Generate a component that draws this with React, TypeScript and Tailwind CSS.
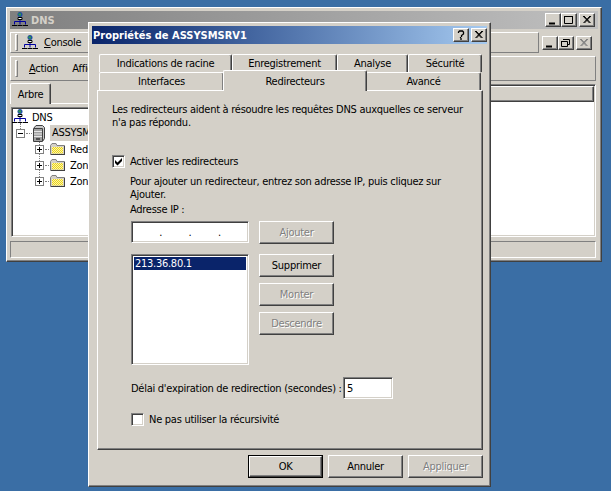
const raised =
  "border border-t-white border-l-white border-r-[#404040] border-b-[#404040] shadow-[inset_-1px_-1px_0_#808080] bg-[#d4d0c8]";
const sunken =
  "border border-t-[#808080] border-l-[#808080] border-r-white border-b-white shadow-[inset_1px_1px_0_#404040,inset_-1px_-1px_0_#d4d0c8] bg-white";
const thin = "border border-t-white border-l-white border-r-[#808080] border-b-[#808080]";
const thinIn = "border border-t-[#808080] border-l-[#808080] border-r-white border-b-white";
const disabledText = "text-[#808080] [text-shadow:1px_1px_0_#fff]";

function MmcIcon() {
  return (
    <svg width="16" height="16" viewBox="0 0 16 16" className="shrink-0">
      <circle cx="8" cy="2.500" r="2.500" fill="#1f4fa0" />
      <path d="M6 1.500h3v2H7z" fill="#2f9e44" />
      <path d="M6 5.500h4v2H6z" fill="#fff" stroke="#000" />
      <path d="M8 8v1.500M2.500 12.500v-3h11v3M8 9.500v3" fill="none" stroke="#0000a0" />
      <path d="M0 13.500h5M11 13.500h5M5.500 13.500h5" stroke="#000" />
    </svg>
  );
}

function ServerIcon() {
  return (
    <svg width="12" height="17" viewBox="0 0 12 17" className="shrink-0">
      <path d="M.5 3.500 3 .5h6.500l2 2v11l-2 3h-9z" fill="#c8c8c8" stroke="#404040" />
      <path d="M1 3.500h8.500V16" fill="none" stroke="#404040" />
      <path d="M1 4h8v12H1z" fill="#a0a0a0" />
      <path d="M1 6.500h8M1 9h8M1 11.500h8" stroke="#e8e8e8" />
      <path d="M3 14h4" stroke="#000" />
    </svg>
  );
}

function FolderIcon({ id }: { id: string }) {
  return (
    <svg width="15" height="14" viewBox="0 0 15 14" className="shrink-0">
      <defs>
        <pattern id={id} width="2" height="2" patternUnits="userSpaceOnUse">
          <rect width="2" height="2" fill="#fff8a0" />
          <rect width="1" height="1" fill="#e8d020" />
          <rect x="1" y="1" width="1" height="1" fill="#e8d020" />
        </pattern>
      </defs>
      <path d="M.5 3.500 2 1.500h4l1 2h7.500v9H.5z" fill="#d4d0c8" stroke="#808080" />
      <path d="M2 5h11v6.500H2z" fill={`url(#${id})`} />
      <path d="M1 12.500h14M14.500 4v9" stroke="#404040" />
    </svg>
  );
}

function Expander({ open }: { open?: boolean }) {
  return (
    <svg width="9" height="9" viewBox="0 0 9 9" className="shrink-0">
      <rect x="0.5" y="0.5" width="8" height="8" fill="#fff" stroke="#808080" />
      <path d={open ? "M2 4.500h5" : "M2 4.500h5M4.500 2v5"} stroke="#000" />
    </svg>
  );
}

function CapButton({ kind, off }: { kind: "min" | "max" | "restore" | "close" | "help"; off?: boolean }) {
  return (
    <div className={`${raised} w-4 h-[14px] flex items-center justify-center`}>
      <svg width="12" height="10" viewBox="0 0 12 10">
        {kind === "min" && <path d="M2 8.500h6" stroke="#000" strokeWidth="2" />}
        {kind === "max" && <path d="M1.500 1.500h8v7h-8zM1 1.500h9" fill="none" stroke="#000" />}
        {kind === "restore" && (
          <path d="M3.500 1.500h6v5h-2M3 1.500h6M1.500 3.500h6v5h-6zM1 3.500h6" fill="none" stroke="#000" />
        )}
        {kind === "close" && (
          <path d="M2 1l6.500 7M3 1l6.500 7M9 1L2.500 8M10 1L3.500 8" stroke={off ? "#808080" : "#000"} />
        )}
        {kind === "help" && (
          <path d="M3.500 3V2l1-1h3l1 1v2l-2 1.500V7M6 8v2M5.500 7v1" fill="none" stroke="#000" strokeWidth="1.300" />
        )}
      </svg>
    </div>
  );
}

function Grip() {
  return <div className={`${thin} w-[3px] h-[17px] shrink-0`} />;
}

function Tab({ label, width, active }: { label: string; width: string; active?: boolean }) {
  return (
    <div
      className={`${width} shrink-0 flex items-center justify-center border-t border-l border-r border-t-white border-l-white border-r-[#404040] rounded-t-[2px] bg-[#d4d0c8] shadow-[inset_-1px_0_0_#808080] ${
        active ? "h-[21px] -mt-[2px] -mb-[1px] relative z-10 -mx-[1px]" : "h-[18px]"
      }`}
    >
      {label}
    </div>
  );
}

function PushButton({ label, disabled, className }: { label: string; disabled?: boolean; className?: string }) {
  return (
    <div className={`${raised} flex items-center justify-center ${disabled ? disabledText : ""} ${className ?? ""}`}>
      {label}
    </div>
  );
}

function Check({ checked }: { checked?: boolean }) {
  return (
    <div className={`${sunken} w-[13px] h-[13px] shrink-0 flex items-center justify-center`}>
      {checked && (
        <svg width="9" height="9" viewBox="0 0 9 9">
          <path d="M1 3l2.500 2.500L8 1v3L3.500 8.500 1 6z" fill="#000" />
        </svg>
      )}
    </div>
  );
}

export default function App() {
  return (
    <div className="relative w-[611px] h-[491px] overflow-hidden bg-[#3a6ea5] text-[11px] leading-[13px] tracking-[-0.27px] text-black font-['DejaVu_Sans',sans-serif] [font-stretch:condensed]">
      {/* Fenêtre DNS */}
      <div className={`${raised} absolute left-[6px] top-[7px] w-[596px] h-[255px] p-[3px] flex flex-col`}>
        <div className="h-[18px] shrink-0 flex items-center pl-[2px] pr-[3px] bg-gradient-to-r from-[#808080] to-[#c0c0c0]">
          <MmcIcon />
          <span className="ml-[3px] font-bold tracking-normal text-[#d4d0c8]">DNS</span>
          <div className="ml-auto flex">
            <CapButton kind="min" />
            <CapButton kind="max" />
            <div className="ml-[2px]">
              <CapButton kind="close" />
            </div>
          </div>
        </div>

        <div className="mt-[3px] h-[21px] shrink-0 flex items-center gap-[3px]">
          <div className={`${thin} w-[530px] h-full flex items-center pl-[4px] gap-[4px]`}>
            <Grip />
            <MmcIcon />
            <span className="ml-[2px]"><u>C</u>onsole</span>
          </div>
          <div className="ml-auto mr-[6px] flex">
            <CapButton kind="min" />
            <CapButton kind="restore" />
            <div className="ml-[2px]">
              <CapButton kind="close" off />
            </div>
          </div>
        </div>

        <div className={`${thin} mt-[3px] mr-[2px] h-[25px] shrink-0 flex items-center pl-[4px] gap-[11px]`}>
          <Grip />
          <span><u>A</u>ction</span>
          <span className="ml-[3px]">Affichage</span>
        </div>

        <div className="mt-[2px] h-[154px] mr-[2px] shrink-0 flex">
          <div className="w-[118px] shrink-0 flex flex-col">
            <div className="h-[21px] shrink-0 flex items-end">
              <div className="h-[21px] w-[41px] flex items-center justify-center border-t border-l border-r border-t-white border-l-white border-r-[#404040] rounded-t-[2px] bg-[#d4d0c8] shadow-[inset_-1px_0_0_#808080]">
                Arbre
              </div>
              <div className="flex-1 border-t border-t-white" />
            </div>
            <div className={`${sunken} relative mt-[3px] ml-[1px] h-[130px] shrink-0 pt-[1px]`}>
              <div className="absolute left-[8px] top-[15px] h-[6px] border-l border-dotted border-[#808080]" />
              <div className="absolute left-[27px] top-[33px] h-[40px] border-l border-dotted border-[#808080]" />

              <div className="relative flex items-center h-4 whitespace-nowrap">
                <MmcIcon />
                <span className="ml-[3px] px-[1px]">DNS</span>
              </div>
              <div className="relative flex items-center h-4 whitespace-nowrap ml-[4px]">
                <Expander open />
                <div className="w-[6px] mx-[1px] shrink-0 border-t border-dotted border-[#808080]" />
                <ServerIcon />
                <span className="ml-[5px] px-[2px] leading-4 bg-[#d4d0c8]">ASSYSMSRV1</span>
              </div>
              {["Redirecteurs", "Zones", "Zones"].map((name, i) => (
                <div key={i} className="relative flex items-center h-4 whitespace-nowrap ml-[23px]">
                  <Expander />
                  <div className="w-[4px] mx-[1px] shrink-0 border-t border-dotted border-[#808080]" />
                  <FolderIcon id={`dither-${i}`} />
                  <span className="ml-[4px] px-[1px]">{name}</span>
                </div>
              ))}
            </div>
          </div>
          <div className={`${sunken} flex-1 mt-[1px] ml-[3px] p-[1px]`}>
            <div className={`${raised} h-[16px]`} />
          </div>
        </div>

        <div className={`${thinIn} mt-[4px] h-[17px] mr-[2px] shrink-0`} />
      </div>

      {/* Boîte de dialogue */}
      <div className={`${raised} absolute left-[88px] top-[22px] w-[403px] h-[465px] p-[3px] flex flex-col`}>
        <div className="h-[18px] shrink-0 flex items-center pl-[1px] bg-gradient-to-r from-[#0a246a] to-[#a6caf0]">
          <span className="font-bold tracking-normal text-white">Propriétés de ASSYSMSRV1</span>
          <div className="ml-auto flex gap-[2px]">
            <CapButton kind="help" />
            <CapButton kind="close" />
          </div>
        </div>

        <div className="px-[5px] pt-[10px] flex-1 flex flex-col">
          <div className="flex pl-[2px]">
            <Tab label="Indications de racine" width="w-[133px]" />
            <Tab label="Enregistrement" width="w-[105px]" />
            <Tab label="Analyse" width="w-[71px]" />
            <Tab label="Sécurité" width="w-[74px]" />
          </div>
          <div className="flex pl-[2px] relative z-10">
            <Tab label="Interfaces" width="w-[125px]" />
            <Tab label="Redirecteurs" width="w-[144px]" active />
            <Tab label="Avancé" width="w-[115px]" />
          </div>
          <div className={`${raised} h-[360px] w-[386px] pl-[14px] pt-[12px] flex flex-col whitespace-nowrap`}>
            <p>
              Les redirecteurs aident à résoudre les requêtes DNS auxquelles ce serveur
              <br />
              n'a pas répondu.
            </p>
            <div className="mt-[26px] flex items-center gap-[5px]">
              <Check checked />
              <span>Activer les redirecteurs</span>
            </div>
            <div className="ml-[18px] mt-[7px] flex flex-col">
              <p>
                Pour ajouter un redirecteur, entrez son adresse IP, puis cliquez sur
                <br />
                Ajouter.
              </p>
              <p className="mt-[2px]">Adresse IP :</p>
              <div className="mt-[5px] ml-[1px] flex gap-[10px]">
                <div className="flex flex-col gap-[11px]">
                  <div className={`${sunken} w-[118px] h-[22px] flex items-center justify-around px-[14px]`}>
                    <span>.</span>
                    <span>.</span>
                    <span>.</span>
                  </div>
                  <div className={`${sunken} w-[118px] h-[111px] p-[2px]`}>
                    <div className="h-[13px] pl-[1px] bg-[#0a246a] text-white">213.36.80.1</div>
                  </div>
                </div>
                <div className="flex flex-col">
                  <PushButton label="Ajouter" disabled className="w-[75px] h-[23px]" />
                  <PushButton label="Supprimer" className="w-[75px] h-[23px] mt-[10px]" />
                  <PushButton label="Monter" disabled className="w-[75px] h-[23px] mt-[6px]" />
                  <PushButton label="Descendre" disabled className="w-[75px] h-[23px] mt-[6px]" />
                </div>
              </div>
              <div className="mt-[12px] ml-[1px] flex items-center">
                <span className="w-[212px]">Délai d'expiration de redirection (secondes) :</span>
                <div className={`${sunken} w-[50px] h-[22px] flex items-center pl-[3px]`}>5</div>
              </div>
              <div className="mt-[14px] ml-[1px] flex items-center gap-[5px]">
                <Check />
                <span>Ne pas utiliser la récursivité</span>
              </div>
            </div>
          </div>
          <div className="mt-[5px] flex justify-end gap-[5px] w-[386px]">
            <div className="border border-black">
              <PushButton label="OK" className="w-[73px] h-[21px]" />
            </div>
            <PushButton label="Annuler" className="w-[75px] h-[23px]" />
            <PushButton label="Appliquer" disabled className="w-[75px] h-[23px]" />
          </div>
        </div>
      </div>
    </div>
  );
}
